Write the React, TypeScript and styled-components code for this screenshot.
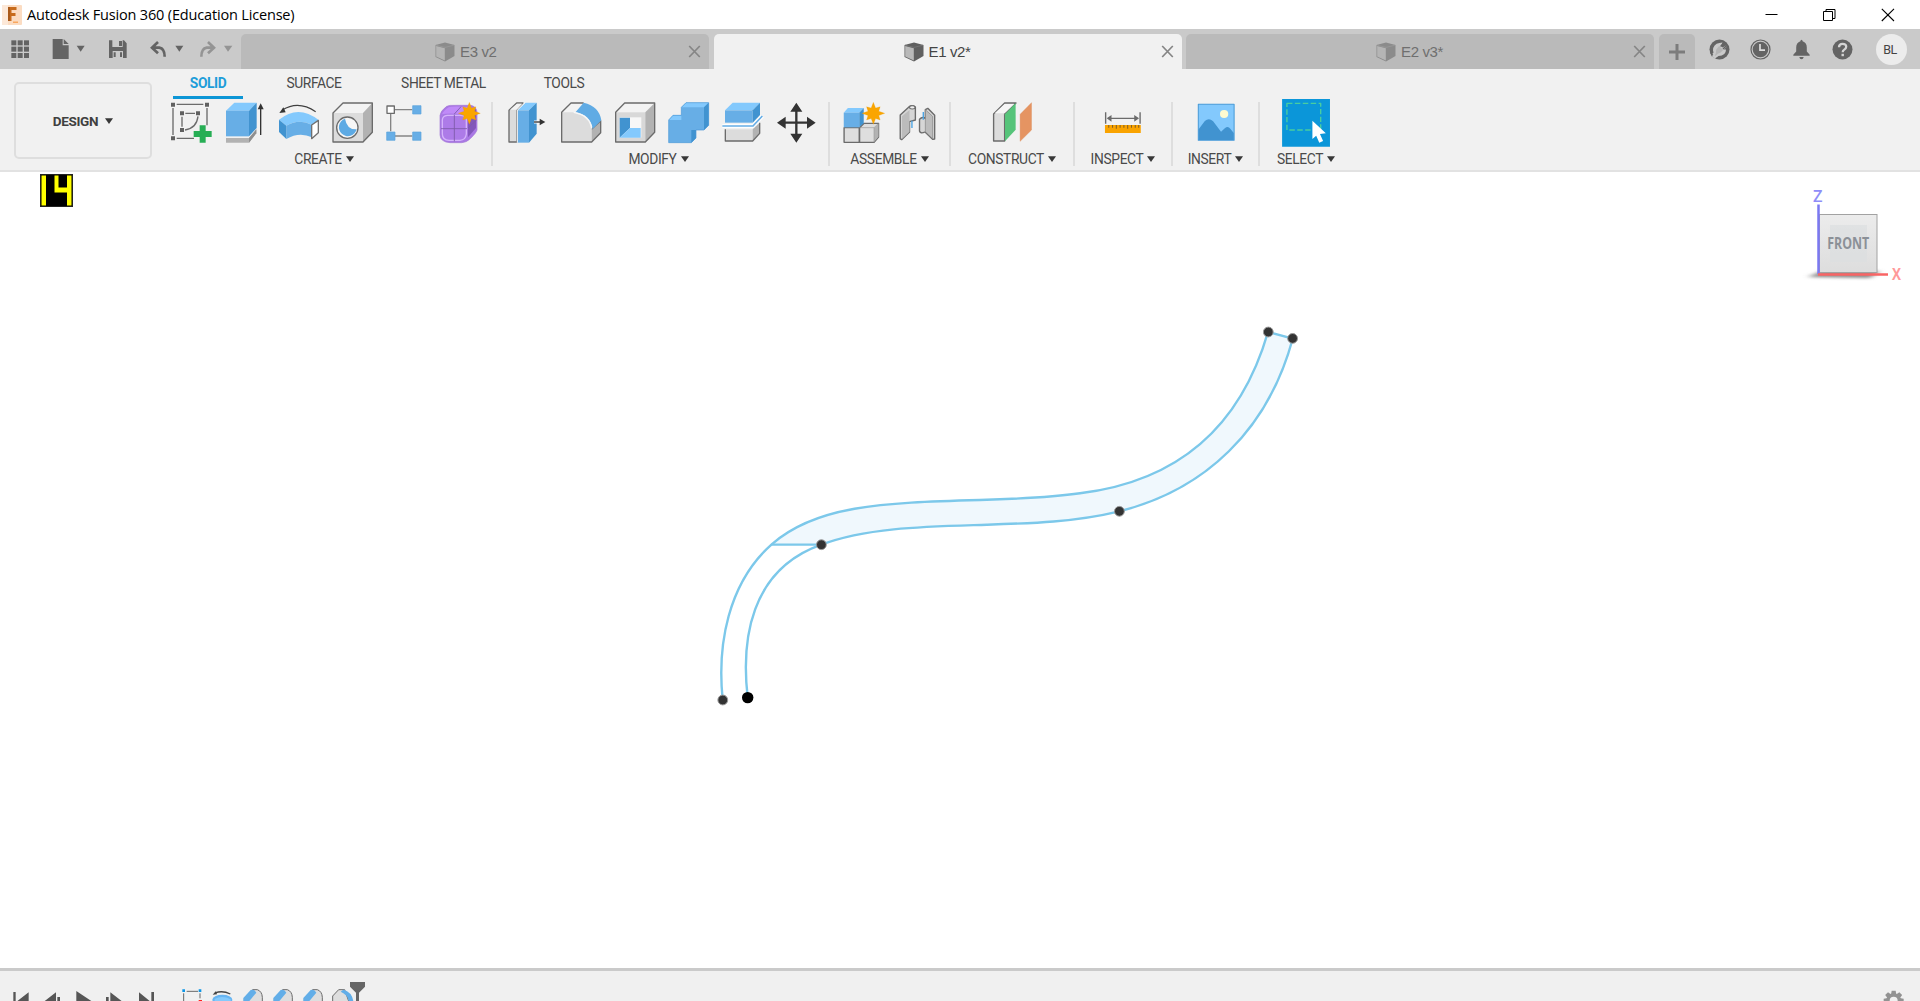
import React from "react";
import styled, { createGlobalStyle } from "styled-components";

const Global = createGlobalStyle`
  html, body { margin: 0; padding: 0; overflow: hidden; background: #fff; }
  * { box-sizing: border-box; }
  svg { display: block; flex: none; }
`;

const Window = styled.div`
  width: 1920px;
  height: 1001px;
  display: flex;
  flex-direction: column;
  overflow: hidden;
  font-family: Roboto, "Liberation Sans", sans-serif;
  color: #404040;
  background: #fff;
`;

/* ---------- title bar ---------- */
const TitleBar = styled.header`
  height: 29px;
  flex: none;
  display: flex;
  align-items: center;
  padding-left: 2px;
`;
const Title = styled.h1`
  margin: 0 auto 0 5px;
  font: 400 14.5px/28px "Open Sans", "Noto Sans", sans-serif;
  letter-spacing: -0.17px;
  color: #000;
`;
const WindowControls = styled.div`
  display: flex;
  padding-right: 25px;
  gap: 45px;
`;

/* ---------- document tabs ---------- */
const TabBar = styled.nav`
  height: 40px;
  flex: none;
  display: flex;
  align-items: flex-end;
  background: #cacaca;
`;
const QuickAccess = styled.div`
  width: 241px;
  height: 40px;
  flex: none;
`;
const DocTab = styled.div<{ $w: number; $active?: boolean }>`
  width: ${(p) => p.$w}px;
  height: 35px;
  margin-right: 4.5px;
  flex: none;
  display: flex;
  align-items: center;
  padding-right: 8px;
  border-radius: 5px 5px 0 0;
  background: ${(p) => (p.$active ? "#f1f1f1" : "#bababa")};
  color: ${(p) => (p.$active ? "#444" : "#6f6f6f")};
`;
const DocName = styled.div<{ $pad: number }>`
  flex: 1;
  display: flex;
  align-items: center;
  gap: 5px;
  padding-left: ${(p) => p.$pad}px;
  padding-top: 1px;
  font: 15px/20px "Liberation Sans", Arial, sans-serif;
  letter-spacing: -0.35px;
  white-space: nowrap;
`;
const AddTab = styled.div`
  width: 36px;
  height: 35px;
  display: flex;
  align-items: center;
  justify-content: center;
  border-radius: 5px 5px 0 0;
  background: #bababa;
`;
const StatusIcons = styled.div`
  height: 40px;
  margin-left: 14px;
  display: flex;
  align-items: center;
  gap: 20px;
`;
const Avatar = styled.div`
  width: 31px;
  height: 31px;
  margin-left: 3px;
  padding-right: 2px;
  border-radius: 50%;
  background: #ececec;
  color: #444;
  font: 12.5px/31px Roboto, sans-serif;
  letter-spacing: -0.5px;
  text-align: center;
`;

/* ---------- ribbon ---------- */
const Ribbon = styled.section`
  height: 103px;
  flex: none;
  display: flex;
  background: #f1f1f1;
  border-bottom: 2px solid #e2e2e2;
`;
const Workspace = styled.button`
  width: 138px;
  height: 77px;
  margin: 13px 8px 0 14px;
  flex: none;
  display: flex;
  align-items: center;
  justify-content: center;
  gap: 7px;
  border: 2px solid #dedede;
  border-radius: 5px;
  background: transparent;
  font: 700 13.5px/16px Roboto, sans-serif;
  letter-spacing: -0.35px;
  color: #404040;
`;
const RibbonBody = styled.div`
  display: flex;
  flex-direction: column;
`;
const RibbonTabs = styled.div`
  height: 30px;
  margin-left: 13px;
  display: flex;
  gap: 26px;
`;
const RibbonTab = styled.div<{ $w: number; $active?: boolean }>`
  width: ${(p) => p.$w}px;
  height: 30px;
  padding-top: 5px;
  text-align: center;
  font-size: 13.8px;
  line-height: 18px;
  font-weight: ${(p) => (p.$active ? 700 : 400)};
  letter-spacing: -0.42px;
  color: ${(p) => (p.$active ? "#1d9dd9" : "#4a4a4a")};
  border-bottom: ${(p) => (p.$active ? "3.5px solid #0d96d6" : "none")};
`;
const Groups = styled.div`
  display: flex;
`;
const Group = styled.div<{ $w: number }>`
  width: ${(p) => p.$w}px;
  display: flex;
  flex-direction: column;
  align-items: center;
`;
const Divider = styled.div`
  width: 2px;
  height: 64px;
  margin: 3px -1px 0;
  background: #dedede;
`;
const IconRow = styled.div<{ $nudge?: number }>`
  height: 48px;
  display: flex;
  padding-left: ${(p) => (p.$nudge || 0) * 2}px;
`;
const GroupLabel = styled.div<{ $shift?: number }>`
  display: flex;
  align-items: center;
  gap: 4px;
  margin-top: 4px;
  padding-right: ${(p) => (p.$shift || 0) * 2}px;
  font-size: 13.8px;
  line-height: 17px;
  letter-spacing: -0.36px;
  color: #4a4a4a;

  svg { margin-bottom: 2px; }
`;

/* ---------- viewport and timeline ---------- */
const Viewport = styled.main`
  height: 796px;
  flex: none;
`;
const Timeline = styled.footer`
  height: 33px;
  flex: none;
  display: flex;
  justify-content: space-between;
  overflow: hidden;
  border-top: 3px solid #cacaca;
  background: #f0f0f0;
`;

const Caret = ({ color = "#383838" }: { color?: string }) => (
  <svg width="8" height="6" viewBox="0 0 8 6">
    <path d="M0 0.2H8L4 6Z" fill={color} />
  </svg>
);

const Cube = ({ active }: { active?: boolean }) => (
  <svg width="20" height="20" viewBox="0 0 20 20">
    <path d="M0.5 3L10 0.5L19.5 3V14L10 19.5L0.5 15Z" fill={active ? "#606060" : "#8b8b8b"} />
    <path d="M1.2 4L9.8 6.2V18.4L1.2 14.4Z" fill={active ? "#b9b9b9" : "#b5b5b5"} />
    <path d="M1 3.2L10 5.4L19 3.2" fill="none" stroke={active ? "#777" : "#999"} strokeWidth="0.8" />
  </svg>
);

const CloseX = () => (
  <svg width="13" height="13" viewBox="0 0 13 13" stroke="#858585" strokeWidth="1.7">
    <path d="M1.2 1L11.8 12M11.8 1L1.2 12" />
  </svg>
);

/* A ribbon tool glyph; the drawings use three units per pixel. */
const Tool = ({ x, w = 162, children }: { x: number; w?: number; children: React.ReactNode }) => (
  <svg width="54" height="48" viewBox={`${x} 87 ${w} 144`} preserveAspectRatio="none" strokeLinejoin="round">
    {children}
  </svg>
);

const Star = ({ cx, cy }: { cx: number; cy: number }) => {
  const pts = Array.from({ length: 16 }, (_, i) => {
    const r = i % 2 ? 17 : i % 4 === 0 ? 33 : 28;
    const a = (i * Math.PI) / 8;
    return `${cx + r * Math.sin(a)},${cy - r * Math.cos(a)}`;
  }).join(" ");
  return <polygon points={pts} fill="#faa500" stroke="#e29b10" strokeWidth="0.6" />;
};

const EDGE = "#6b6b6b";

const CreateTools = () => (
  <>
    <Tool x={12}>
      <path d="M50 103H130M39 114V195M50 205H102M141 114V166" fill="none" stroke={EDGE} strokeWidth="4" />
      <path d="M66 140V170M76 130H105M114 139Q110 174 75 180" fill="none" stroke={EDGE} strokeWidth="4" />
      <path d="M33 98h12v12h-12zM135 98h12v12h-12zM33 199h12v12h-12zM60 124h12v12h-12zM108 124h12v12h-12zM60 174h12v12h-12z" fill="#606060" />
      <path d="M119 166h18v17h18v18h-18v17h-18v-17h-18v-18h18z" fill="#27ae55" />
    </Tool>
    <Tool x={174}>
      <path d="M198 204H267L289 178V189L267 218H198Z" fill="#b2b2b2" />
      <path d="M267 204L289 178V190L267 218Z" fill="#8f8f8f" />
      <path d="M198 122L223 98H290L267 122Z" fill="#83c9fd" />
      <path d="M198 122H267V199H198Z" fill="#67aee6" />
      <path d="M267 122L290 98V174L267 199Z" fill="#4193d0" />
      <path d="M302 195V110" stroke="#333" strokeWidth="4" />
      <path d="M302 100L311 118H293Z" fill="#333" />
    </Tool>
    <Tool x={336}>
      <path d="M367 120Q415 90 467 125" fill="none" stroke="#404040" strokeWidth="3.5" />
      <path d="M358 129L370 112L377 127Z" fill="#333" />
      <path d="M357 149Q415 102 476 150L456 165Q418 144 379 167Z" fill="#83c9fd" />
      <path d="M379 167Q418 144 456 165V202Q418 184 379 207Z" fill="#67aee6" />
      <path d="M357 149L379 167V207L357 186Z" fill="#4193d0" />
      <path d="M455 165L475 151V188L455 206Z" fill="#fff" stroke="#707070" strokeWidth="4" />
    </Tool>
    <Tool x={498}>
      <path d="M519 129L549 99H637L609 129Z" fill="#f3f3f3" />
      <path d="M519 129H609V216H519Z" fill="#dcdcdc" />
      <path d="M609 129L637 99V187L609 216Z" fill="#b2b2b2" />
      <path d="M519 129L549 99H637V187L609 216H519Z" fill="none" stroke={EDGE} strokeWidth="4" />
      <circle cx="562" cy="173" r="32" fill="#f6f6f6" stroke={EDGE} strokeWidth="4" />
      <path d="M555 146Q561 180 590 178A27 27 0 1 1 555 146Z" fill="#5daae4" />
    </Tool>
    <Tool x={660}>
      <path d="M704 119H757M692 132V184M704 198H757" stroke="#858585" strokeWidth="4" />
      <path d="M681 108h22v22h-22z" fill="#fff" stroke={EDGE} strokeWidth="4" />
      <path d="M758 107h25v25h-25zM680 186h25v25h-25zM758 186h25v25h-25z" fill="#67aee6" stroke="#5ba4dc" strokeWidth="2" />
    </Tool>
    <Tool x={822}>
      <path d="M840 136Q842 122 860 109Q867 105 888 106H932Q948 109 951 125V180Q949 188 932 205Q920 218 905 218H870Q841 216 840 195Z" fill="#a978e4" />
      <path d="M848 145Q849 138 862 136H895Q918 137 919 145V195Q917 210 900 211H867Q849 210 848 194Z" fill="#ad7be8" />
      <path d="M846 133Q850 122 866 112Q878 107 926 111L906 132Q860 129 846 133Z" fill="#c08af8" />
      <path d="M924 140L948 116V174L924 202Z" fill="#8256bb" />
      <path d="M847 150Q847 138 862 136H900Q919 137 919 147V192Q917 210 900 211H867Q847 210 847 192Z" fill="none" stroke="#d5b3fb" strokeWidth="4" />
      <path d="M883 134V214M843 176H921M924 174L950 150M883 132L903 110" fill="none" stroke="#7d5aa8" strokeWidth="2.6" />
      <path d="M840 136Q842 122 860 109Q867 105 888 106H932Q948 109 951 125V180Q949 188 932 205Q920 218 905 218H870Q841 216 840 195Z" fill="none" stroke="#a479d6" strokeWidth="2" />
      <Star cx={928} cy={130} />
    </Tool>
  </>
);

const ModifyTools = () => (
  <>
    <Tool x={30}>
      <path d="M57 121L80 99H99L81 119V216H57Z" fill="#dcdcdc" stroke={EDGE} strokeWidth="4" />
      <path d="M60 119L81 101H97L80 119Z" fill="#f3f3f3" />
      <path d="M83 121L106 98H140L117 121Z" fill="#83c9fd" />
      <path d="M83 121H117V218H83Z" fill="#67aee6" />
      <path d="M117 121L140 98V191L117 218Z" fill="#4193d0" />
      <path d="M82 218V120L106 97" fill="none" stroke="#f8f8f8" strokeWidth="3" />
      <path d="M132 156H154" stroke="#fff" strokeWidth="9" />
      <path d="M132 156H154" stroke="#333" strokeWidth="4" />
      <path d="M166 156L149 146V166Z" fill="#333" />
    </Tool>
    <Tool x={192}>
      <path d="M215 127L243 99H281Q330 114 332 155V188L305 216H215Z" fill="#f3f3f3" />
      <path d="M215 127H255Q301 136 305 176V216H215Z" fill="#dcdcdc" />
      <path d="M305 177L332 150V188L305 216Z" fill="#b2b2b2" />
      <path d="M305 177L332 152V188L305 216H215V127L243 99H281" fill="none" stroke={EDGE} strokeWidth="4" />
      <path d="M257 126L281 98Q328 109 334 151L308 177Q302 135 257 126Z" fill="#60abe4" />
      <path d="M251 127Q300 136 305 176" fill="none" stroke="#f8f8f8" strokeWidth="4" />
    </Tool>
    <Tool x={354}>
      <path d="M377 127L404 99H494L466 127Z" fill="#f3f3f3" />
      <path d="M377 127H466V216H377Z" fill="#d8d8d8" />
      <path d="M466 127L494 99V187L466 216Z" fill="#b2b2b2" />
      <path d="M377 127L404 99H494V187L466 216H377Z" fill="none" stroke={EDGE} strokeWidth="4" />
      <path d="M389 142H454V203H389Z" fill="#f7f7f7" />
      <path d="M389 143H420V174L389 203Z" fill="#4193d0" />
      <path d="M420 174H452V203H389Z" fill="#83c9fd" />
    </Tool>
    <Tool x={516}>
      <path d="M536 150L549 136H574V112L588 98H656V166L642 180H618V204L604 218H536Z" fill="#67aee6" />
      <path d="M536 150L549 136H574V150ZM574 112L588 98H656L642 112Z" fill="#83c9fd" />
      <path d="M642 112L656 98V166L642 180ZM604 218L618 204V180H604Z" fill="#4193d0" />
      <path d="M536 150L549 136H574V112L588 98H656V166L642 180H618V204L604 218H536Z" fill="none" stroke="#4b99d8" strokeWidth="2" />
    </Tool>
    <Tool x={678}>
      <path d="M706 178H788V213H706Z" fill="#dcdcdc" />
      <path d="M788 178L809 158V190L788 213Z" fill="#b2b2b2" />
      <path d="M706 178V213H788L809 190V158" fill="none" stroke={EDGE} strokeWidth="4" />
      <path d="M705 121L728 98H810L788 121Z" fill="#83c9fd" />
      <path d="M705 121H788V158H705Z" fill="#67aee6" />
      <path d="M788 121L810 98V135L788 158Z" fill="#4193d0" />
      <path d="M697 168H789L817 138" fill="none" stroke="#fff" strokeWidth="12" />
      <path d="M697 168H789L817 138" fill="none" stroke="#67aee6" strokeWidth="5" />
    </Tool>
    <Tool x={840}>
      <path d="M919 112V203M875 158H963" stroke="#333" strokeWidth="7" />
      <path d="M919 98L937 125H901ZM919 218L937 191H901ZM861 158L887 140V176ZM977 158L951 140V176Z" fill="#333" />
    </Tool>
  </>
);

const AssembleTools = () => (
  <>
    <Tool x={46.5} w={156.8}>
      <path d="M70 173H114V217H70ZM115 173L128 160H170V201L157 217H115Z" fill="#dedede" stroke={EDGE} strokeWidth="4" />
      <path d="M157 174L170 161V200L157 216Z" fill="#b2b2b2" />
      <path d="M115 173H157V217M157 173L170 160" fill="none" stroke="#999" strokeWidth="2" />
      <path d="M69 128L81 114H127L114 128Z" fill="#83c9fd" />
      <path d="M69 128H114V172H69Z" fill="#67aee6" />
      <path d="M114 128L127 114V160L114 172Z" fill="#4193d0" />
      <Star cx={155} cy={130} />
    </Tool>
    <Tool x={203.3} w={156.8}>
      <path d="M233 135L259 110Q268 104 277 111V150L260 155V186L237 209L233 206Z" fill="#d6d6d6" stroke={EDGE} strokeWidth="4" />
      <path d="M238 139L260 120V185L238 207Z" fill="#bcbcbc" />
      <ellipse cx="268" cy="112" rx="8" ry="5" fill="#f1f1f1" stroke={EDGE} strokeWidth="3" />
      <path d="M289 148Q299 138 306 146V119L313 115L333 136V207L327 208L305 186Q291 192 289 183Z" fill="#d6d6d6" stroke={EDGE} strokeWidth="4" />
      <path d="M306 119L327 139V206L306 185Z" fill="#bcbcbc" stroke="#858585" strokeWidth="2" />
      <path d="M267 152V174M300 126V149" stroke="#4ca4e4" strokeWidth="4" />
    </Tool>
  </>
);

const ConstructTool = () => (
  <Tool x={480} w={156.8}>
    <path d="M505 132L537 99H570L537 132V213H505Z" fill="#dcdcdc" stroke={EDGE} strokeWidth="4" />
    <path d="M508 130L537 102H565L537 130Z" fill="#f6f6f6" />
    <path d="M538 133L569 99V179L538 214Z" fill="#56c47a" />
    <path d="M582 133L615 98V180L582 214Z" fill="#e59462" stroke="#d8854f" />
  </Tool>
);

const InspectTool = () => (
  <Tool x={804} w={156.8}>
    <path d="M832 127V161M932 127V161M842 145H923" stroke={EDGE} strokeWidth="4" />
    <path d="M835 145L849 135V155ZM929 145L915 135V155Z" fill={EDGE} />
    <path d="M830 165H934V189H830Z" fill="#f9a300" />
    <path d="M841 165V173M852 165V173M863 165V176M874 165V173M885 165V173M896 165V176M907 165V173M918 165V173M928 165V173" stroke="#826026" strokeWidth="3" />
  </Tool>
);

const InsertTool = () => (
  <Tool x={1070} w={156.8}>
    <path d="M1097 103H1201V211H1097Z" fill="#83c9fd" stroke="#489bd8" strokeWidth="3" />
    <path d="M1098 178L1116 153Q1128 142 1140 154L1163 185L1174 175Q1183 167 1190 176L1200 189V210H1098Z" fill="#4193d0" />
    <circle cx="1172" cy="132" r="12" fill="#fffbd0" />
  </Tool>
);

const SelectTool = () => (
  <Tool x={1333} w={156.8}>
    <path d="M1342 87H1481V230H1342Z" fill="#0b96d9" />
    <path d="M1356 100H1454V180H1356Z" fill="none" stroke="#49cda0" strokeWidth="4" strokeDasharray="16 7" />
    <path d="M1430 152L1469 190L1452 192L1461 213L1450 218L1441 197L1430 207Z" fill="#fff" />
  </Tool>
);

const QuickAccessIcons = () => (
  <svg width="241" height="40" viewBox="0 87 723 120">
    <g fill="#646464">
      {[0, 1, 2].map((r) =>
        [0, 1, 2].map((c) => <rect key={`${r}${c}`} x={34 + c * 19} y={121 + r * 19} width="15" height="15" />)
      )}
      <path d="M158 117H188V136H206V177H158Z" />
      <path d="M191 117L206 132H191Z" />
      <path d="M230 137H254L242 155Z" />
      <path fillRule="evenodd" d="M327 121H372L380 130V174H327ZM337 121V141H368V121ZM338 153V174H369V153Z" />
      <path d="M357 123H366V138H357ZM341 157H347V171H341ZM360 157H366V171H360Z" />
      <path d="M526 137H550L538 155Z" />
    </g>
    <g fill="none" strokeWidth="8">
      <path d="M474 126L456 143L474 160M457 143H478Q494 146 494 170" stroke="#646464" />
      <path d="M624 126L642 143L624 160M641 143H620Q604 146 604 170" stroke="#949494" />
    </g>
    <path d="M672 137H697L684 155Z" fill="#949494" />
  </svg>
);

const Labelled = ({ text, shift }: { text: string; shift?: number }) => (
  <GroupLabel $shift={shift}>
    {text}
    <Caret />
  </GroupLabel>
);

const Sketch = () => (
  <svg width="1920" height="796" viewBox="0 172 1920 796">
    <defs>
      <linearGradient id="face" x1="0" y1="0" x2="0" y2="1">
        <stop offset="0" stopColor="#ececec" />
        <stop offset="1" stopColor="#dddddd" />
      </linearGradient>
      <filter id="soft" x="-20%" y="-100%" width="140%" height="300%">
        <feGaussianBlur stdDeviation="3 1.6" />
      </filter>
    </defs>

    <rect x="40.5" y="174.5" width="32" height="32" fill="#000" stroke="#222" />
    <path d="M41.5 175.5H46V205.5H41.5ZM54.5 175.5H58.5V187.5H67V175.5H71.5V205.5H67V192.5H54.5Z" fill="#ff0" />

    <path
      d="M771.7 544.3C815 506 880 502.5 980 500C1015 499 1048 498 1080 493.3C1180 481 1241 425 1268 332L1292.7 338.7C1268 430 1205 490 1119.3 511.3C1075 522 1032 523.3 986.7 524.7C930 526.5 868 527 821.3 544.7Z"
      fill="#f0f8fd"
    />
    <g fill="none" stroke="#7cc8ea" strokeWidth="2.4">
      <path d="M722.7 700C717 645 728 583 771.7 544.3C815 506 880 502.5 980 500C1015 499 1048 498 1080 493.3C1180 481 1241 425 1268 332L1292.7 338.7C1268 430 1205 490 1119.3 511.3C1075 522 1032 523.3 986.7 524.7C930 526.5 868 527 821.3 544.7C750 570 741 640 747.7 697.7" />
      <path d="M771.7 544.6H821" />
    </g>
    <g fill="#333" stroke="#999" strokeWidth="1">
      {[[722.8, 700], [821.4, 544.7], [1119.4, 511.3], [1268.3, 332], [1292.6, 338.4]].map(([x, y]) => (
        <circle key={x} cx={x} cy={y} r="4.9" />
      ))}
    </g>
    <circle cx="747.7" cy="697.6" r="5.7" fill="#000" />

    <path d="M1808 277L1822 271H1880L1870 278Z" fill="#888" filter="url(#soft)" />
    <rect x="1819.5" y="214.5" width="57.5" height="58" fill="url(#face)" stroke="#a2a2a2" />
    <rect x="1830" y="225" width="37" height="37" fill="#dcdee0" opacity="0.7" />
    <path d="M1818.5 204.5V274" stroke="#7b78f2" strokeWidth="2.5" />
    <path d="M1818 274.5H1888" stroke="#f96464" strokeWidth="2.5" />
    <g fontFamily="'Open Sans', 'Noto Sans', sans-serif" textAnchor="middle">
      <text x="1848.2" y="249.3" fontSize="15.5" fontWeight="700" fill="#8b9097" textLength="42" lengthAdjust="spacingAndGlyphs">FRONT</text>
      <text x="1817.8" y="201.5" fontSize="16.5" fontWeight="600" fill="#8f8df8">Z</text>
      <text x="1896.4" y="279.8" fontSize="16.5" fontWeight="700" fill="#f99" textLength="9" lengthAdjust="spacingAndGlyphs">X</text>
    </g>
  </svg>
);

const TimelineIcons = () => (
  <svg width="400" height="30" viewBox="0 63 1200 90">
    <g fill="#565656">
      <path d="M40 126H47V188H40ZM86 127V187L47 157Z" />
      <path d="M168 127V187L129 157ZM172 141H180V180H172Z" />
      <path d="M229 123L277 155L229 187Z" />
      <path d="M318 141H326V180H318ZM331 127L370 157L331 187Z" />
      <path d="M417 127L454 157L417 187ZM454 126H462V188H454Z" />
    </g>
    <path d="M560 124H594M551 130V180M600 130V145" fill="none" stroke="#686868" strokeWidth="3" />
    <path d="M547 118h8v8h-8zM596 118h8v8h-8z" fill="#0d96e6" />
    <path d="M596 150h10v8h-10z" fill="#f22" />
    <ellipse cx="667" cy="149" rx="30" ry="15" fill="#67b5f2" />
    <path d="M644 147Q666 134 692 148V165H644Z" fill="#85cafc" />
    <path d="M645 129Q667 120 691 132" fill="none" stroke="#444" strokeWidth="4" />
    <path d="M638 134L648 123L651 133Z" fill="#444" />
    {[0, 90, 180].map((dx) => (
      <g key={dx} transform={`translate(${dx} 0)`}>
        <path d="M728 150L757 119H772Q786 124 787 142V170H734Z" fill="#dedede" />
        <path d="M757 119H772Q786 124 787 142V160" fill="none" stroke={EDGE} strokeWidth="3" />
        <path d="M730 144L752 120Q764 117 769 128L744 158H730Z" fill="#62aee8" />
      </g>
    ))}
    <path d="M998 165V138L1016 119H1034L1050 165Z" fill="#dedede" stroke={EDGE} strokeWidth="3" />
    <path d="M1022 125L1030 119Q1055 125 1060 153H1046Q1043 134 1022 125Z" fill="#62aee8" />
    <path d="M1050 96H1095V110L1077 128V160H1068V128L1050 110Z" fill="#666" />
  </svg>
);

const Gear = () => (
  <svg width="120" height="30" viewBox="0 63 360 90">
    <g fill="#929292">
      {[0, 45, 90, 135, 180, 225, 270, 315].map((a) => (
        <path key={a} d="M275 122H287L289 135H273Z" transform={`rotate(${a} 281 152)`} />
      ))}
    </g>
    <circle cx="281" cy="152" r="17" fill="none" stroke="#929292" strokeWidth="10" />
  </svg>
);

export default function App() {
  return (
    <Window>
      <Global />
      <TitleBar>
        <svg width="20" height="20" viewBox="0 0 20 20">
          <rect width="20" height="20" rx="1" fill="#fbdcc2" />
          <path d="M0 0H6V20H0Z" fill="#fce8d8" />
          <path d="M6 2H14.5V5H9.5V8H13.5V11H9.5V16H6Z" fill="#c76b1c" />
          <path d="M6 2H8V16H6Z" fill="#a9591a" />
          <path d="M11 16.5H16V18H11Z" fill="#f8a75f" />
        </svg>
        <Title>Autodesk Fusion 360 (Education License)</Title>
        <WindowControls>
          <svg width="13" height="14" viewBox="0 0 13 14"><path d="M0.5 6.5H12.5" stroke="#000" /></svg>
          <svg width="13" height="14" viewBox="0 0 13 14" fill="none" stroke="#000"><path d="M0.5 3.5H9.5V12.5H0.5ZM3 3.5V1.5H12V10.5H9.5" /></svg>
          <svg width="14" height="14" viewBox="0 0 14 14"><path d="M0.8 0.8L13 13M13 0.8L0.8 13" stroke="#000" strokeWidth="1.1" /></svg>
        </WindowControls>
      </TitleBar>

      <TabBar>
        <QuickAccess><QuickAccessIcons /></QuickAccess>
        <DocTab $w={468}>
          <DocName $pad={194}><Cube />E3 v2</DocName>
          <CloseX />
        </DocTab>
        <DocTab $w={468} $active>
          <DocName $pad={190}><Cube active />E1 v2*</DocName>
          <CloseX />
        </DocTab>
        <DocTab $w={468}>
          <DocName $pad={190}><Cube />E2 v3*</DocName>
          <CloseX />
        </DocTab>
        <AddTab>
          <svg width="18" height="18" viewBox="0 0 18 18"><path d="M9 1V17M1 9H17" stroke="#7c7c7c" strokeWidth="3" /></svg>
        </AddTab>
        <StatusIcons>
          <svg width="21" height="21" viewBox="0 0 21 21">
            <circle cx="10.5" cy="10.5" r="10" fill="#646464" />
            <path d="M4 11.5Q4 5 10.5 4L13.5 3.6L12 7L13.6 8.6L17 6.6L17.5 8L14.8 10.6L17 10.6Q17 17 9.5 17L6 19.5L2 16.5L4.5 13.5Z" fill="#cacaca" />
            <path d="M5.8 16.8Q7.4 13.5 7.2 10.5L10.2 7L14.2 11L11.4 13.8Q9 13.8 7 16.6Z" fill="#8e8e8e" opacity="0.35" />
            <path d="M0.8 13L4.2 15.6L2.8 17.4Z" fill="#646464" />
            <path d="M11.6 7.6L14.6 4.2M14 10L17.4 6.8" stroke="#646464" strokeWidth="1.5" />
          </svg>
          <svg width="21" height="21" viewBox="0 0 21 21">
            <circle cx="10.5" cy="10.5" r="9.5" fill="none" stroke="#646464" strokeWidth="1.2" />
            <circle cx="10.5" cy="10.5" r="7.8" fill="#646464" />
            <path d="M10 5V11.2H15" fill="none" stroke="#ddd" strokeWidth="1.7" />
          </svg>
          <svg width="21" height="21" viewBox="0 0 21 21" fill="#646464">
            <path d="M9.4 2.2Q9.4 0.7 10.5 0.7T11.6 2.2Q15.8 3.5 15.8 8.5V12.5L18.7 15.7V16.8H2.3V15.7L5.2 12.5V8.5Q5.2 3.5 9.4 2.2ZM8.3 18H12.7Q12.3 20.2 10.5 20.2T8.3 18Z" />
          </svg>
          <svg width="21" height="21" viewBox="0 0 21 21">
            <circle cx="10.5" cy="10.5" r="10" fill="#646464" />
            <path d="M7 8.2Q7 4.8 10.6 4.8T14.2 7.8Q14.2 9.4 12.3 10.6Q10.7 11.6 10.7 13.2" fill="none" stroke="#d5d5d5" strokeWidth="2.3" />
            <rect x="9.5" y="14.8" width="2.4" height="2.4" fill="#d5d5d5" />
          </svg>
          <Avatar>BL</Avatar>
        </StatusIcons>
      </TabBar>

      <Ribbon>
        <Workspace>DESIGN<Caret /></Workspace>
        <RibbonBody>
          <RibbonTabs>
            <RibbonTab $w={70} $active>SOLID</RibbonTab>
            <RibbonTab $w={90}>SURFACE</RibbonTab>
            <RibbonTab $w={117}>SHEET METAL</RibbonTab>
            <RibbonTab $w={72}>TOOLS</RibbonTab>
          </RibbonTabs>
          <Groups>
            <Group $w={332}><IconRow><CreateTools /></IconRow><Labelled text="CREATE" shift={2} /></Group>
            <Divider />
            <Group $w={337}><IconRow $nudge={1}><ModifyTools /></IconRow><Labelled text="MODIFY" shift={2} /></Group>
            <Divider />
            <Group $w={121}><IconRow><AssembleTools /></IconRow><Labelled text="ASSEMBLE" /></Group>
            <Divider />
            <Group $w={124}><IconRow><ConstructTool /></IconRow><Labelled text="CONSTRUCT" /></Group>
            <Divider />
            <Group $w={98}><IconRow><InspectTool /></IconRow><Labelled text="INSPECT" /></Group>
            <Divider />
            <Group $w={87}><IconRow><InsertTool /></IconRow><Labelled text="INSERT" /></Group>
            <Divider />
            <Group $w={94}><IconRow><SelectTool /></IconRow><Labelled text="SELECT" /></Group>
          </Groups>
        </RibbonBody>
      </Ribbon>

      <Viewport><Sketch /></Viewport>
      <Timeline>
        <TimelineIcons />
        <Gear />
      </Timeline>
    </Window>
  );
}
